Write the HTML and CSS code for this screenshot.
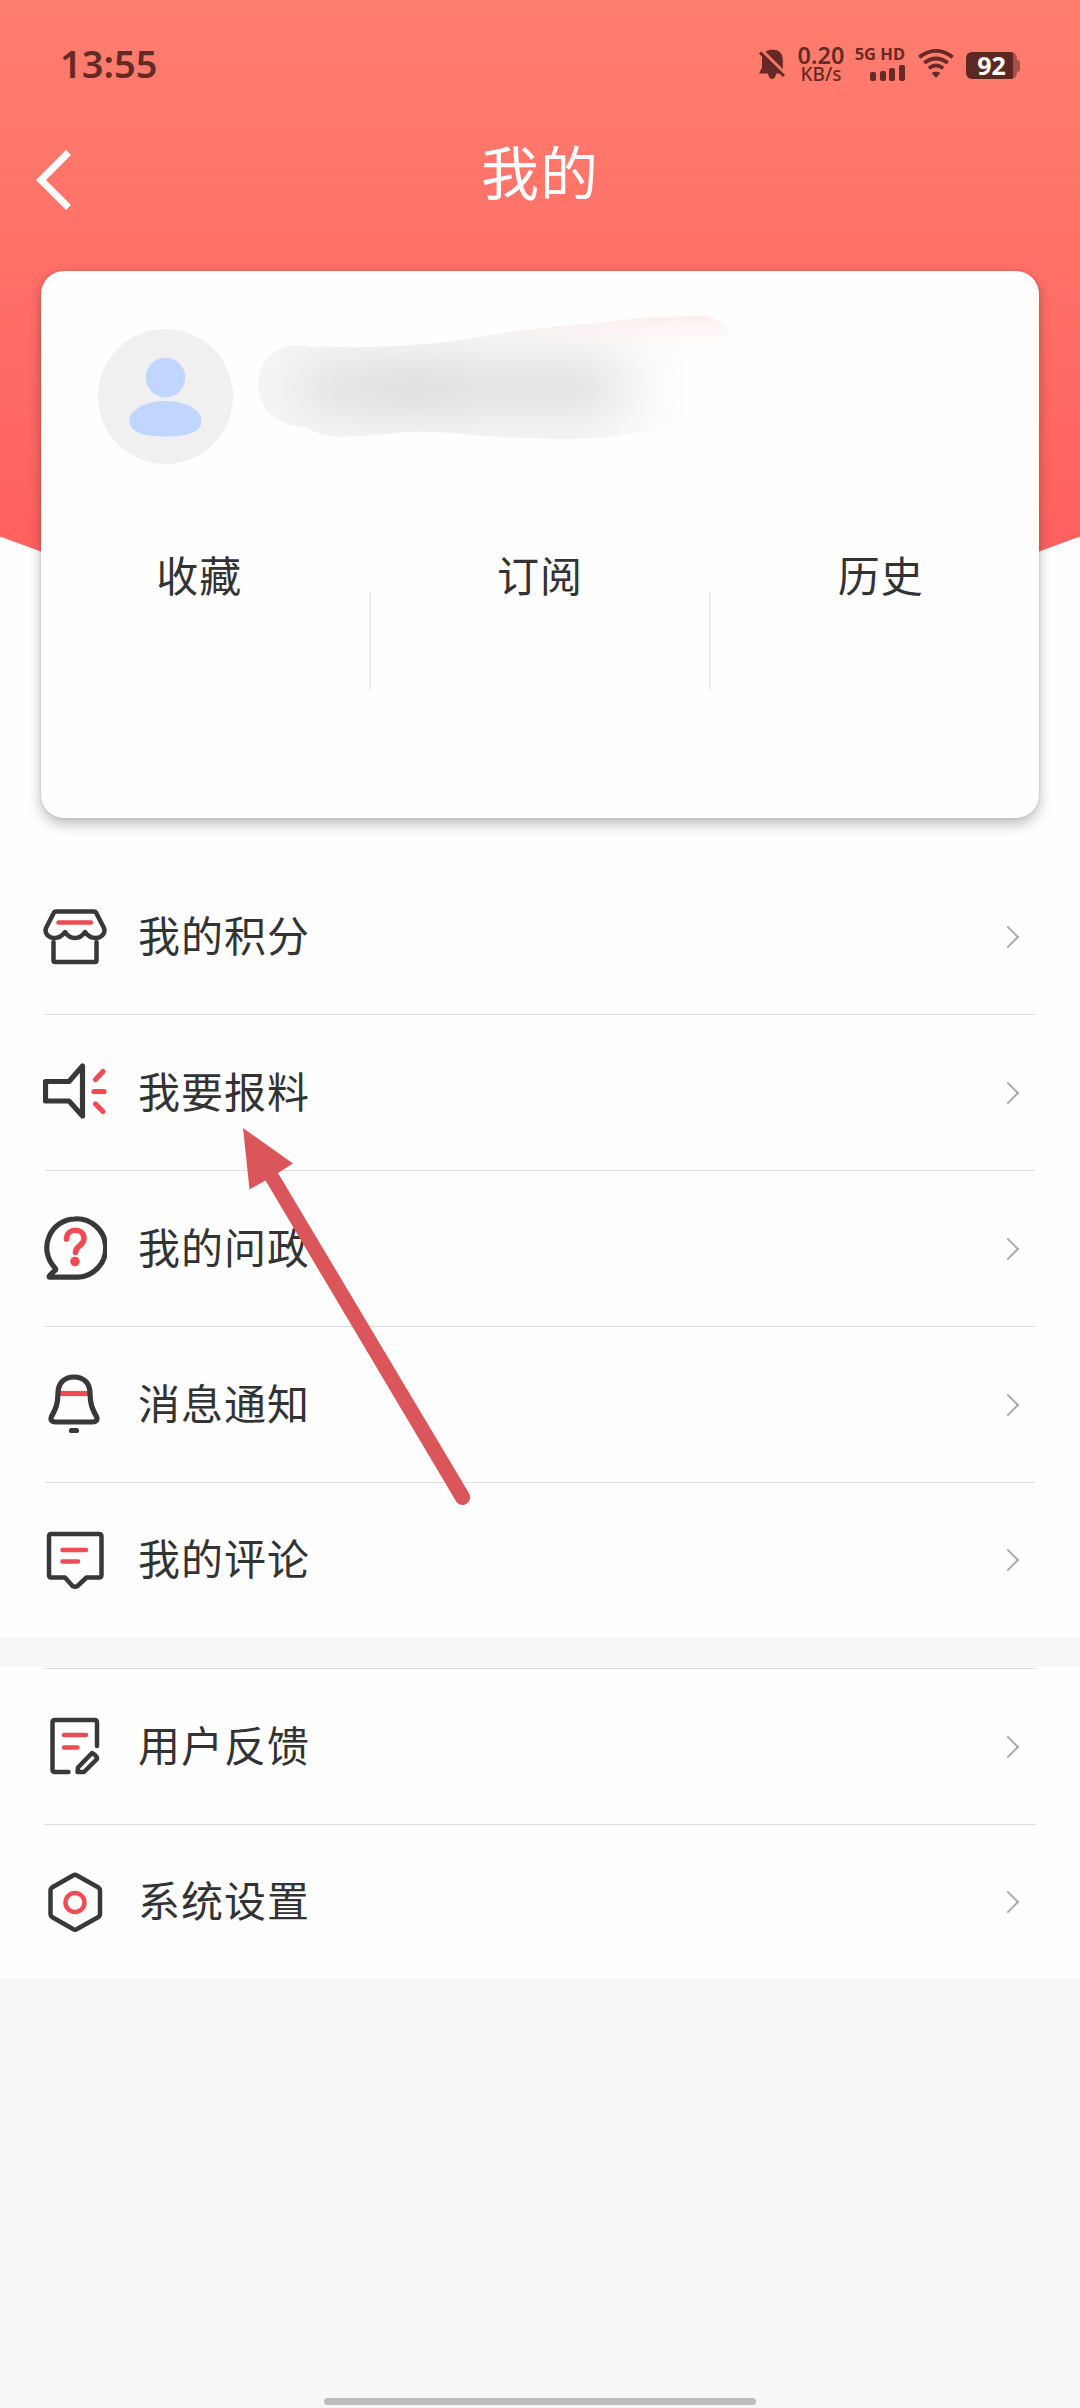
FILE: index.html
```html
<!DOCTYPE html>
<html lang="zh-CN">
<head>
<meta charset="utf-8">
<title>我的</title>
<link rel="stylesheet" href="styles.css">
</head>
<body>
<div class="screen">
  <section class="hero">
    <svg class="hero-bg" viewBox="0 0 1080 620" preserveAspectRatio="none">
      <defs><linearGradient id="heroFill" x1="0" y1="0" x2="0" y2="1"><stop offset="0" stop-color="#ff7e6e"/><stop offset="1" stop-color="#ff5e5e"/></linearGradient></defs>
      <path fill="url(#heroFill)" d="M0 0H1080V536.500L1039 551.500Q800 610 540 610T41 551.500L0 536.500Z"/>
    </svg>
    <header class="status">
      <span class="time">13:55</span>
      <div class="indicators">
        <svg class="bell" width="28" height="32" viewBox="0 0 28 32"><path d="M14.500 1.500C8 1.500 4 6 4 12v7.500L1 25.500h9C10.500 29 12 31 14 31s3.800-2 4.300-5.500h6.500V12c0-6.500-4-10.500-10.300-10.500Z"/><path class="slash-gap" d="M1 0 28 27"/><path class="slash" d="M2 4.500 26 28"/></svg>
        <div class="speed"><span>0.20</span><small>KB/s</small></div>
        <div class="cell"><span>5G HD</span>
          <svg width="35" height="16" viewBox="0 0 35 16"><rect y="7" width="6" height="9" rx="2"/><rect x="10" y="6" width="6" height="10" rx="2"/><rect x="19" y="3" width="6" height="13" rx="2"/><rect x="29" width="6" height="16" rx="2"/></svg>
        </div>
        <svg class="wifi" width="36" height="30" viewBox="0 0 36 30"><g fill="none" stroke-width="3.800"><path d="M1.300 8.200Q18-4.500 34.700 8.200"/><path d="M6.300 14Q18 5 29.700 14"/><path d="M10.800 19.200Q18 13.700 25.200 19.200"/></g><path stroke="none" d="M13.500 24Q18 21 22.500 24L18 29Z"/></svg>
        <div class="battery"><b>92</b></div>
      </div>
    </header>
    <nav class="titlebar">
      <svg class="back" width="36" height="62" viewBox="0 0 36 62"><path d="M32.500 3.500 5 31 32.500 58.500"/></svg>
      <h1>我的</h1>
    </nav>
    <div class="card">
      <div class="profile">
        <svg class="avatar" viewBox="0 0 135 135"><circle cx="67.500" cy="67.500" r="67.500" fill="#f0f0f0"/><circle cx="67.500" cy="48.500" r="19.800" fill="#c0d5ff"/><path fill="#c0d5ff" d="M31.500 92C31.500 80 48 72 67.500 72s36 8 36 20-16 15.500-36 15.500S31.500 104 31.500 92Z"/></svg>
        <svg class="smudge" width="480" height="126" viewBox="258 314 480 126">
          <defs>
            <clipPath id="swipe"><path d="M258 386C258 362 274 345 298 345Q304 345 312 347Q330 346 350 347.500Q410 347 468 339Q505 332 542 328L602 322.700Q625 319 647 317.700L696 315.700C718 315 732 328 738 352V430H657C635 432 625 437 597 437.700Q572 440 547 438.700Q510 438 478 435.700Q440 431 408 432Q370 436 338 436.700Q318 436 306 426.500C280 428 258 410 258 386Z"/></clipPath>
            <filter id="soft" x="-50%" y="-120%" width="200%" height="340%"><feGaussianBlur stdDeviation="26 22"/></filter>
            <linearGradient id="blush" x1="0" y1="0" x2="0" y2="1"><stop offset="0" stop-color="#fde4e2"/><stop offset="1" stop-color="#fefefe" stop-opacity="0"/></linearGradient>
            <linearGradient id="haze" x1="0" y1="0" x2="1" y2="0"><stop offset="0" stop-color="#f5f5f5"/><stop offset=".65" stop-color="#f5f5f5"/><stop offset=".9" stop-color="#fefefe"/></linearGradient>
            <linearGradient id="blushIn" x1="0" y1="0" x2="1" y2="0"><stop offset="0" stop-color="#000"/><stop offset=".55" stop-color="#fff"/></linearGradient>
            <mask id="blushMask"><path fill="url(#blushIn)" d="M440 308H738V352H440Z"/></mask>
          </defs>
          <g clip-path="url(#swipe)">
            <path fill="url(#haze)" d="M258 314H738V440H258Z"/>
            <g filter="url(#soft)"><rect x="300" y="362" width="320" height="52" fill="#e2e2e2"/><rect x="370" y="372" width="90" height="34" fill="#d9d9d9"/></g>
            <path fill="url(#blush)" mask="url(#blushMask)" d="M440 308H738V352H440Z"/>
          </g>
        </svg>
      </div>
      <div class="tabs"><a>收藏</a><a>订阅</a><a>历史</a></div>
    </div>
  </section>

  <main>
    <ul class="menu">
      <li><svg class="ico" viewBox="0 0 64 64"><path d="M11 8.500Q11.600 7.500 13 7.500H51Q52.400 7.500 53 8.500L61 24C63 29.500 58 34 53 34Q46 34 42 28Q38 34 32 34T22 28Q18 34 11 34C6 34 1 29.500 3 24ZM10.500 38V56.500Q10.500 58 12 58H52Q53.500 58 53.500 56.500V38"/><path class="red" d="M15.500 18.500H48"/></svg><span>我的积分</span><i class="go"></i></li>
      <li><svg class="ico bold" viewBox="0 0 64 64"><path d="M2.500 21.500H26L39.500 6V56L26 41H2.500Z"/><path class="red" d="M60 11.500 52.500 19.500M51 31.500H61M52.500 44 60 51.500"/></svg><span>我要报料</span><i class="go"></i></li>
      <li><svg class="ico bold" viewBox="0 0 64 64"><path d="M32 2.800A29 29 0 0 1 35 61.200H6.500C5.500 61 6 59.500 12.500 54Q13 53 12 52A29 29 0 0 1 32 2.800Z"/><path class="red question" d="M23.500 23C24 11 41 12 41 22.500C41 30 32.500 29.500 32.500 36.500"/><circle cx="32" cy="45.500" r="4.800" fill="#f04a55" stroke="none"/></svg><span>我的问政</span><i class="go"></i></li>
      <li><svg class="ico bold" viewBox="0 0 64 64"><path class="red" d="M17 21.500H46" stroke-linecap="butt"/><path d="M31 5C21 5 15 11.500 15 21C15 33 12 38 8.500 44.500C7 48 9 50 12.500 50H49.500C53 50 55 48 53.500 44.500C50 38 47 33 47 21C47 11.500 41 5 31 5ZM28.500 58.500H33.500"/></svg><span>消息通知</span><i class="go"></i></li>
      <li><svg class="ico" viewBox="0 0 64 64"><path d="M8 6H56Q58.500 6 58.500 8.500V47Q58.500 49.500 56 49.500H43.500L34.500 58Q32 59.500 29.500 58L22 49.500H8Q6 49.500 6 47V8.500Q6 6 8 6Z"/><path class="red" d="M19.500 22H43M19.500 33.500H35"/></svg><span>我的评论</span><i class="go"></i></li>
    </ul>
    <ul class="menu second">
      <li><svg class="ico" viewBox="0 0 64 64"><path d="M54 32V8.500Q54 6 51.500 6H12Q9.500 6 9.500 8.500V55.500Q9.500 58 12 58H25.500M35 53.500 49 39Q54.500 42 54 45L41 58H34.500Z"/><path class="red" d="M21 21H43M21 33.500H34.500"/></svg><span>用户反馈</span><i class="go"></i></li>
      <li><svg class="ico" viewBox="0 0 64 64"><path d="M30 5.500Q32 4 34 5.500L55.500 17.500Q57 18.500 57 20.500V44Q57 46 55.500 47L34 59Q32 60.500 30 59L9 47Q7.500 46 7.500 44V20.500Q7.500 18.500 9 17.500Z"/><circle class="red" cx="32" cy="32.500" r="9.500"/></svg><span>系统设置</span><i class="go"></i></li>
    </ul>
  </main>
  <footer><div class="home"></div></footer>
  <svg class="pointer" width="232" height="378" viewBox="0 0 232 378"><path d="M1 0 51 35.500 36 45 227.500 366Q230 374 222 377Q217 377.500 214.500 374L23.500 52.500 7.500 61.500Z"/></svg>
</div>
</body>
</html>
```
FILE: styles.css
```css
* { box-sizing: border-box; }
body { margin: 0; background: #f7f7f7; color: #333; font-family: "Noto Sans CJK SC", sans-serif; }
.screen { position: relative; width: 1080px; height: 2408px; display: flex; flex-direction: column; }

.hero { position: relative; height: 859px; background: #fefefe; }
.hero-bg { position: absolute; left: 0; top: 0; width: 1080px; height: 620px; }
.status, .titlebar, .card { position: relative; }

.status { height: 128px; padding: 0 60px; display: flex; align-items: center; justify-content: space-between; color: #662a26; font-family: "Noto Sans", sans-serif; }
.time { margin-bottom: 3px; font-size: 38px; font-weight: 600; line-height: 52px; }
.indicators { display: flex; align-items: center; fill: #662a26; stroke: none; }
.bell { margin-right: 10px; }
.slash-gap { stroke: #ff7a6c; stroke-width: 4; }
.slash { stroke: #662a26; stroke-width: 3; }
.speed { width: 50px; display: flex; flex-direction: column; align-items: center; font-size: 23.500px; font-weight: 600; line-height: 21px; margin: 0 11px 1px 0; }
.speed small { font-size: 19px; line-height: 17px; font-weight: 500; }
.cell { width: 48px; display: flex; flex-direction: column; align-items: flex-end; gap: 4px; font-size: 16.500px; font-weight: 700; line-height: 14px; white-space: nowrap; margin: 0 13px 1px 0; }
.wifi { stroke: #662a26; margin-right: 12px; }
.battery { position: relative; width: 51px; height: 27px; margin-top: 2px; border-radius: 6px; background: linear-gradient(90deg, #5d2724 47px, #a5504a 47px); display: flex; align-items: center; justify-content: center; color: #fff; font-size: 25px; line-height: 27px; margin-right: 3px; }
.battery::after { content: ""; position: absolute; left: 51px; top: 8px; width: 3px; height: 12px; border-radius: 0 3px 3px 0; background: #a5504a; }

.titlebar { height: 143px; padding: 0 36px; display: grid; grid-template-columns: 36px 1fr 36px; align-items: start; }
.back { margin-top: 21px; fill: none; stroke: #fff; stroke-width: 7; }
.titlebar h1 { margin: 0; font-size: 58px; line-height: 84px; font-weight: 400; letter-spacing: 1px; color: #fff; text-align: center; }

.card { width: 998px; height: 547px; margin: 0 auto; padding-top: 43px; border-radius: 23px; background: #fefefe; box-shadow: 0 6px 14px rgba(0,0,0,.26), 0 0 3px rgba(0,0,0,.15); }
.profile { display: flex; align-items: flex-start; padding-left: 57px; height: 225px; gap: 25px; }
.avatar { width: 135px; height: 135px; margin-top: 15px; }
.tabs { margin: 0 -12px; display: grid; grid-template-columns: repeat(3, 1fr); }
.tabs a { position: relative; height: 152px; padding-top: 5px; text-align: center; font-size: 42px; line-height: 60px; letter-spacing: 1px; }
.tabs a + a::before { content: ""; position: absolute; left: -1px; top: 52px; width: 2px; height: 100px; background: #eee; }

.menu { margin: 0; padding: 0 45px; list-style: none; background: #fefefe; }
.menu li { height: 156px; display: flex; align-items: center; border-bottom: 1px solid #ddd; }
.menu li:last-child { height: 154px; border-bottom: 0; }
.ico { width: 64px; height: 64px; margin: 0 31px 1px -2px; fill: none; stroke: #383838; stroke-width: 4.500; stroke-linecap: round; stroke-linejoin: round; }
.ico.bold { stroke-width: 5.200; }
.ico .red { stroke: #f04a55; }
.ico .question { stroke-width: 5.600; }
.menu span { flex: 1; margin-bottom: 6px; font-size: 42px; line-height: 60px; letter-spacing: 1px; }
.go { width: 16px; height: 16px; margin-right: 19px; border: solid #aaa; border-width: 2px 2px 0 0; transform: rotate(45deg); }
.second { margin-top: 30px; padding-top: 1px; }
.second li:first-child { height: 157px; border-top: 1px solid #ddd; }

footer { flex: 1; display: flex; justify-content: center; align-items: flex-end; padding-bottom: 3px; }
.home { width: 432px; height: 7px; border-radius: 4px; background: #bcbcbc; }
.pointer { position: absolute; left: 242px; top: 1128px; fill: #db565b; }
```
